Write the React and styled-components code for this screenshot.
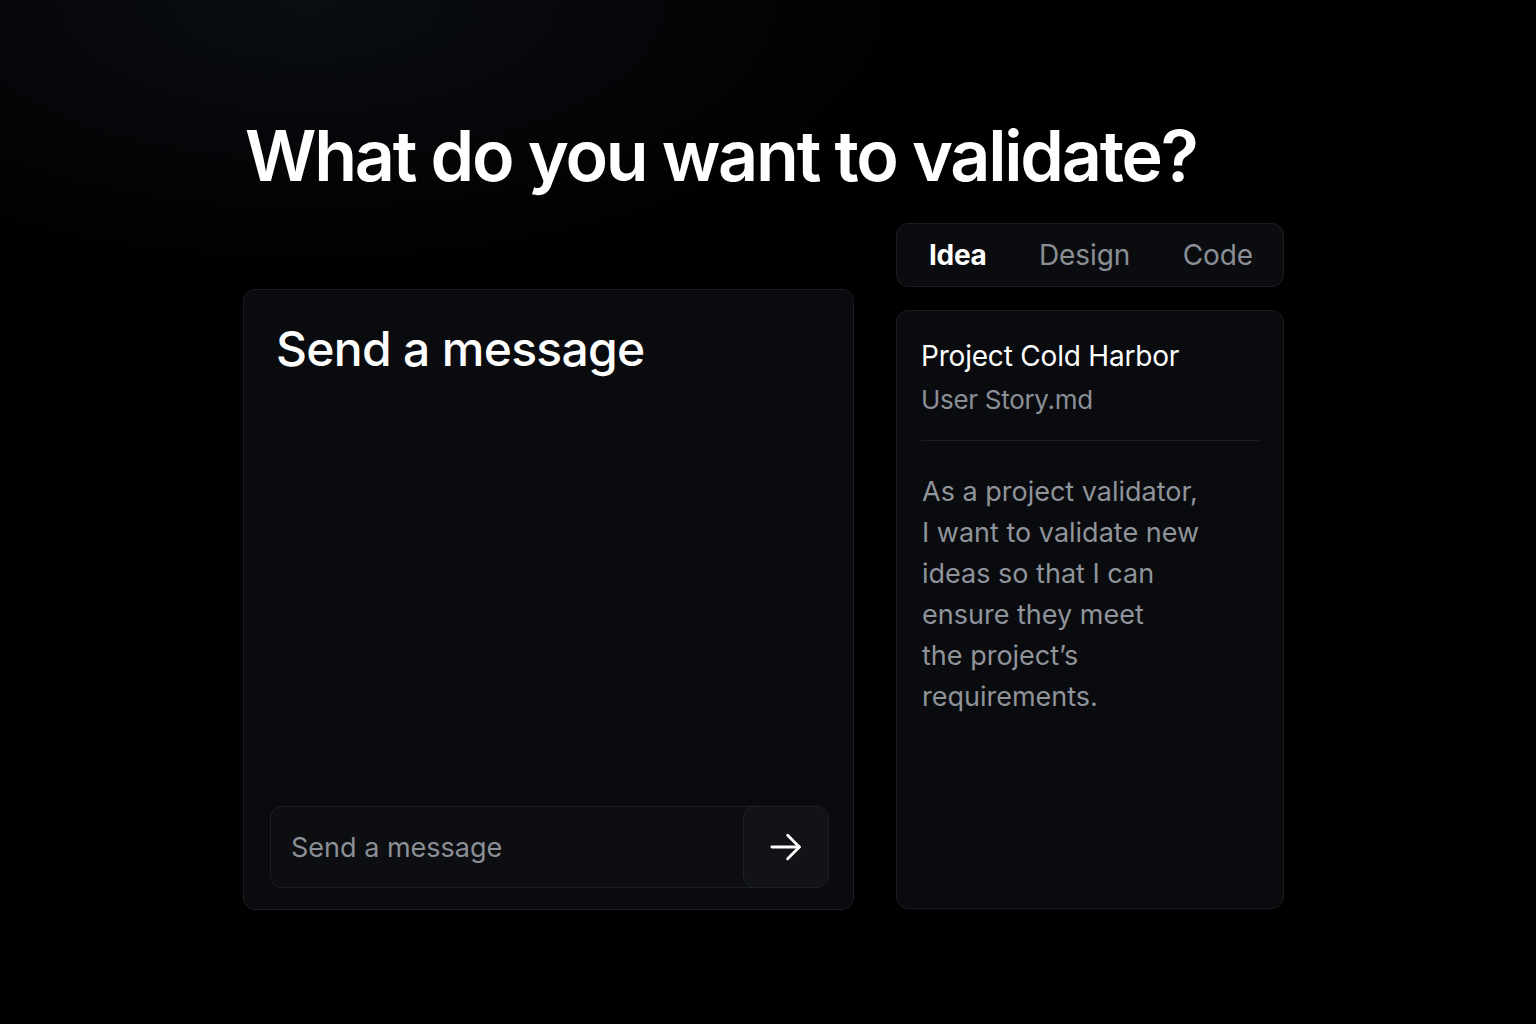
import React from "react";
import styled, { createGlobalStyle } from "styled-components";

const GlobalStyle = createGlobalStyle`
  html, body {
    margin: 0;
    padding: 0;
    background: #000;
  }
  body {
    font-family: Inter, "Noto Sans", sans-serif;
    -webkit-font-smoothing: antialiased;
  }
`;

const Page = styled.div`
  width: 1536px;
  height: 1024px;
  box-sizing: border-box;
  padding: 112px 0 0 243px;
  background:
    radial-gradient(ellipse 900px 400px at 20% 0%, #0a0d12 0%, rgba(0, 0, 0, 0) 70%),
    #000;
  color: #fff;
`;

const Title = styled.h1`
  margin: 0 0 0 2px;
  font-size: 70px;
  font-weight: 600;
  line-height: 88px;
  letter-spacing: -2.25px;
  color: #fff;
`;

const Columns = styled.div`
  display: flex;
  gap: 42px;
  margin-top: 23px;
  align-items: flex-start;
`;

const Card = styled.div`
  box-sizing: border-box;
  background: #0a0b0e;
  border: 1px solid #1b1d21;
  border-radius: 12px;
`;

const ChatCard = styled(Card)`
  width: 611px;
  height: 621px;
  margin-top: 66px;
  padding: 28px 24px 21px 26px;
  display: flex;
  flex-direction: column;
`;

const ChatTitle = styled.h2`
  margin: 0 0 0 6px;
  font-size: 48px;
  font-weight: 500;
  line-height: 62px;
  letter-spacing: -0.7px;
  color: #fff;
`;

const InputRow = styled.div`
  margin-top: auto;
  display: flex;
  height: 82px;
  box-sizing: border-box;
  border: 1px solid #1c1f24;
  border-radius: 12px;
  background: #0d0e11;
  overflow: hidden;
`;

const Placeholder = styled.div`
  flex: 1;
  display: flex;
  align-items: center;
  padding-left: 20px;
  font-size: 27px;
  color: #8b8f96;
`;

const SendButton = styled.div`
  width: 86px;
  box-sizing: border-box;
  border: 1px solid #1f2227;
  border-radius: 12px;
  margin: -1px;
  background: #111317;
  display: flex;
  align-items: center;
  justify-content: center;
`;

const Side = styled.div`
  width: 388px;
  display: flex;
  flex-direction: column;
  gap: 23px;
`;

const Tabs = styled(Card)`
  height: 64px;
  display: flex;
  align-items: center;
  padding: 0 30px 0 32px;
  justify-content: space-between;
  background: #0b0c0f;
`;

const Tab = styled.div`
  font-size: 28px;
  font-weight: ${(p) => (p.$active ? 700 : 400)};
  color: ${(p) => (p.$active ? "#fff" : "#8a8e95")};
  letter-spacing: ${(p) => (p.$active ? "-0.3px" : "-0.1px")};
`;

const DocCard = styled(Card)`
  height: 599px;
  padding: 26px 24px 0 24px;
`;

const DocTitle = styled.div`
  font-size: 28px;
  font-weight: 400;
  line-height: 38px;
  letter-spacing: -0.2px;
  color: #fff;
`;

const DocFile = styled.div`
  margin-top: 7px;
  font-size: 26px;
  line-height: 36px;
  letter-spacing: -0.3px;
  color: #8b8f96;
`;

const Divider = styled.div`
  height: 1px;
  background: #1c1e22;
  margin-top: 22px;
`;

const Body = styled.p`
  margin: 30px 0 0 1px;
  font-size: 27px;
  line-height: 41px;
  color: #8f939a;
`;

const ArrowIcon = () => (
  <svg width="40" height="40" viewBox="0 0 24 24" fill="none" stroke="#fff" strokeWidth="1.7" strokeLinecap="round" strokeLinejoin="round">
    <path d="M3.5 12h16.5" />
    <path d="M13 5l7 7-7 7" />
  </svg>
);

const App = () => {
  return (
    <Page>
      <GlobalStyle />
      <Title>What do you want to validate?</Title>
      <Columns>
        <ChatCard>
          <ChatTitle>Send a message</ChatTitle>
          <InputRow>
            <Placeholder>Send a message</Placeholder>
            <SendButton>
              <ArrowIcon />
            </SendButton>
          </InputRow>
        </ChatCard>
        <Side>
          <Tabs>
            <Tab $active>Idea</Tab>
            <Tab>Design</Tab>
            <Tab>Code</Tab>
          </Tabs>
          <DocCard>
            <DocTitle>Project Cold Harbor</DocTitle>
            <DocFile>User Story.md</DocFile>
            <Divider />
            <Body>
              As a project validator,
              <br />I want to validate new
              <br />ideas so that I can
              <br />ensure they meet
              <br />the project’s
              <br />requirements.
            </Body>
          </DocCard>
        </Side>
      </Columns>
    </Page>
  );
};

export default App;
